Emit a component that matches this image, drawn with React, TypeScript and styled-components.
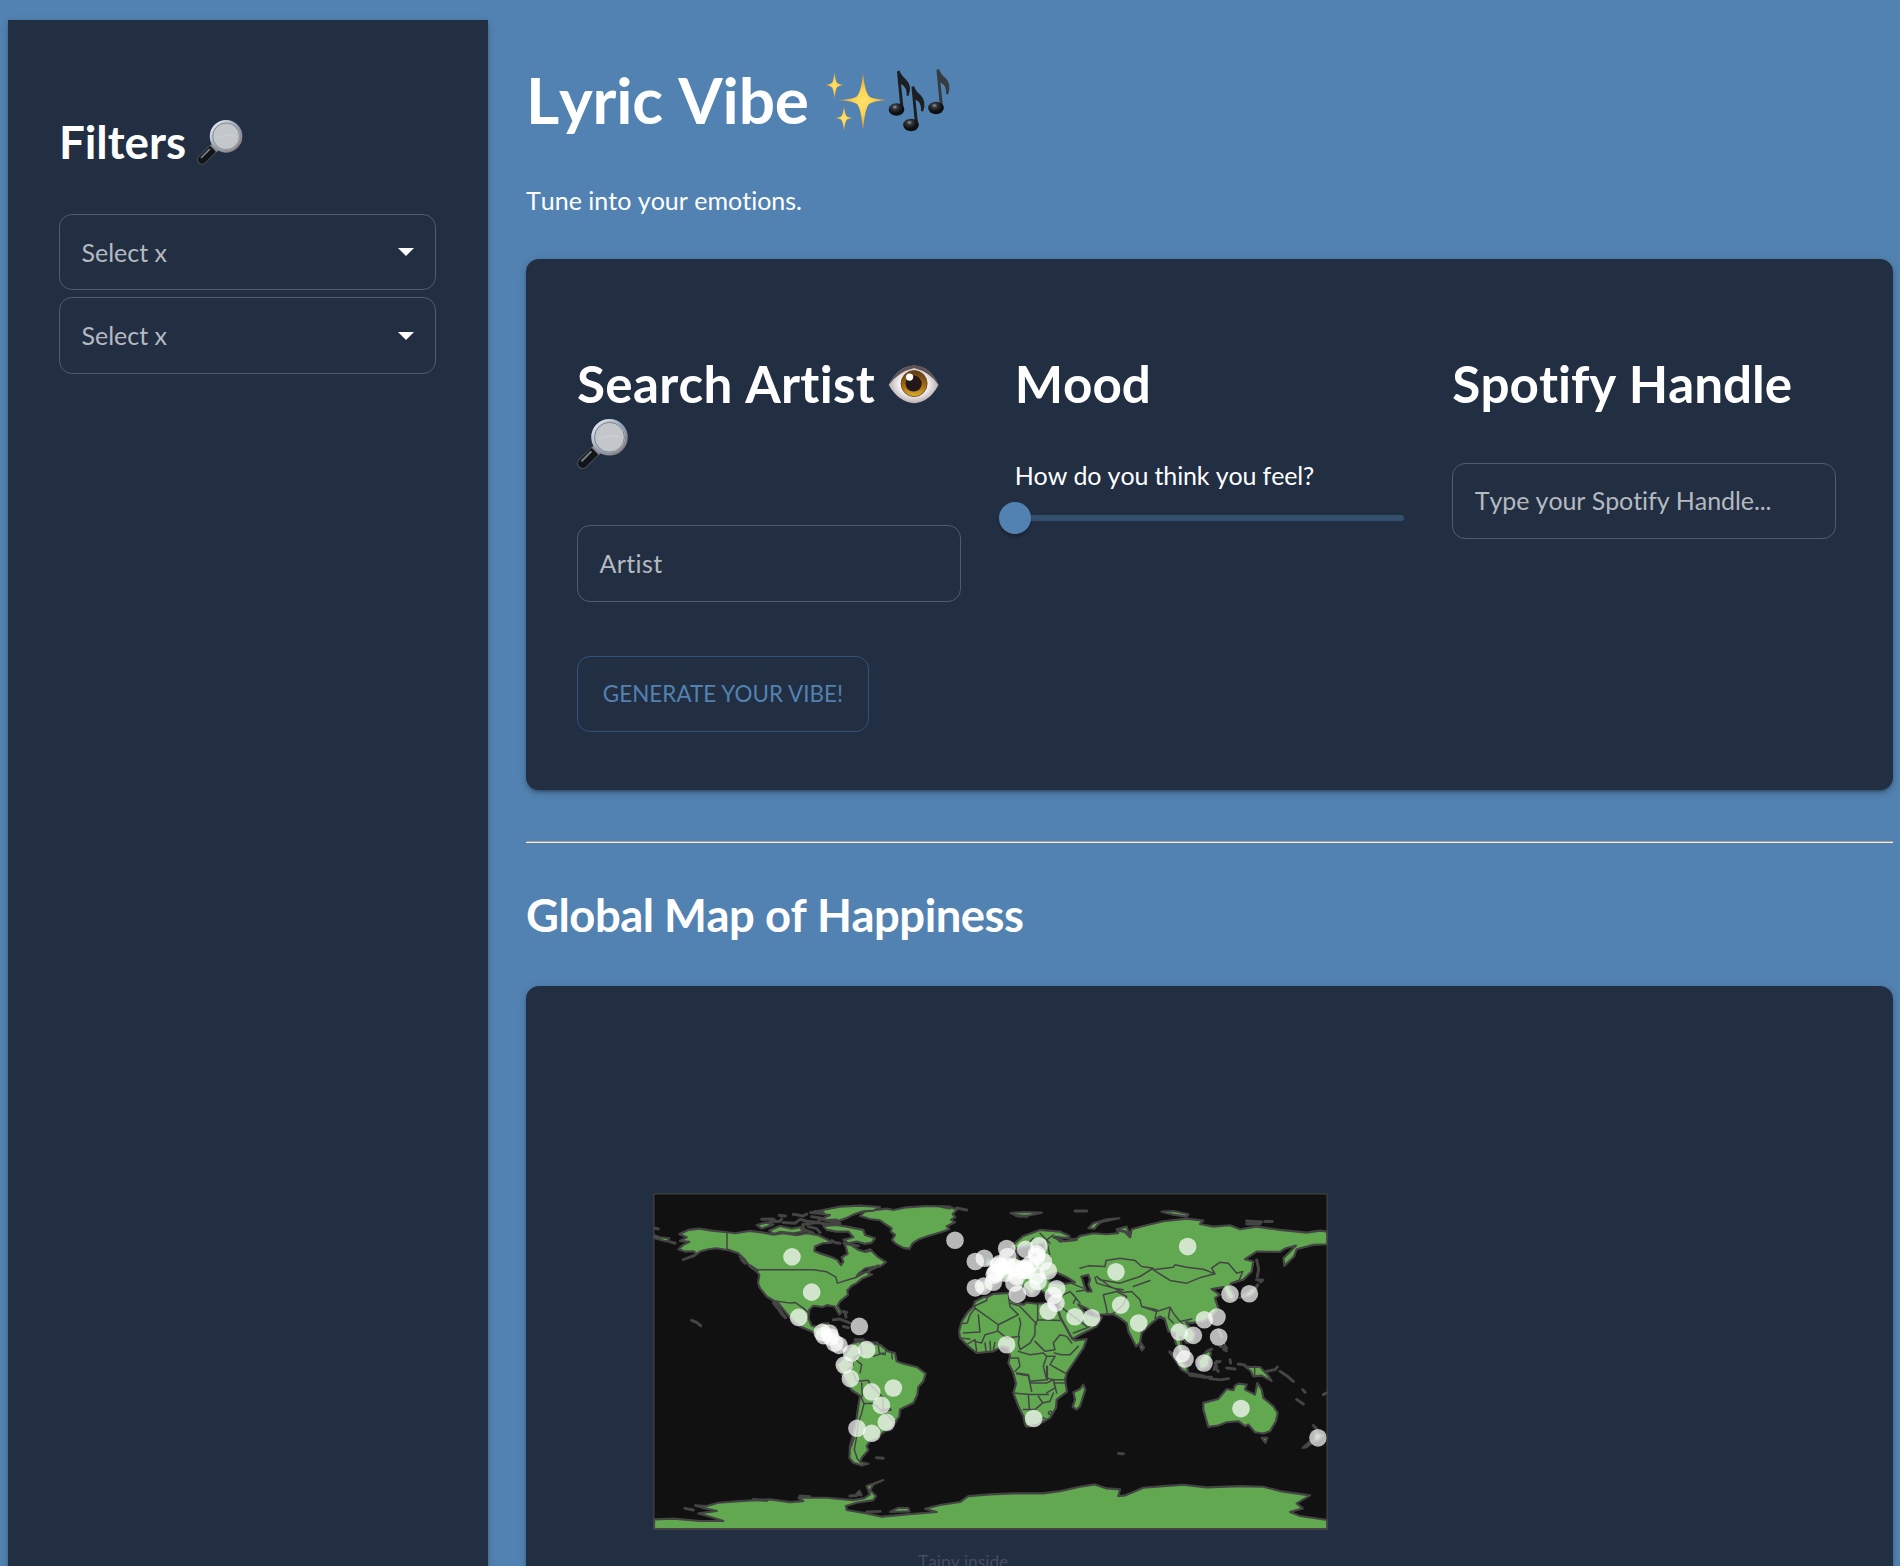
import React from 'react';
import styled, { createGlobalStyle } from 'styled-components';

const Global = createGlobalStyle`
  * { box-sizing: border-box; }
  html { background: #5282b1; }
  body { margin: 0; overflow: hidden; background: #5282b1; color: #fff; font-family: Lato, "Liberation Sans", sans-serif; font-size: 25px; line-height: 1.5; font-kerning: none; font-variant-ligatures: none; }
`;

const Page = styled.div`
  display: grid;
  grid-template-columns: 480px 1367px;
  column-gap: 38px;
  height: 1566px;
  padding-left: 8px;
  overflow: hidden;
`;

const shadow = '0 3px 3px -2px rgba(0,0,0,.3), 0 3px 4px rgba(0,0,0,.14), 0 2px 8px rgba(0,0,0,.14)';

const Sidebar = styled.aside`
  margin-top: 20px;
  padding: 95px 52px 0 51px;
  background: #222e42;
  box-shadow: ${shadow};
`;

const Main = styled.main`
  display: flex;
  flex-direction: column;
`;

const Heading = styled.h1<{ $size: number; $tracking?: number }>`
  margin: 0;
  font-size: ${p => p.$size}px;
  font-weight: 700;
  line-height: 1.167;
  letter-spacing: ${p => p.$tracking ?? 0}px;
`;

const Title = styled(Heading)`
  padding-top: 63px;
`;

const Tagline = styled.p`
  margin: 44.500px 0 0;
  height: 38px;
`;

const SelectList = styled.div`
  display: flex;
  flex-direction: column;
  gap: 7.2px;
  margin-top: 45.3px;
`;

const Field = styled.div<{ $tracking?: number }>`
  display: flex;
  align-items: center;
  justify-content: space-between;
  height: 76.5px;
  padding: 1px 21.4px 0;
  border: 1px solid #515c6b;
  border-radius: 13px;
  color: #b5b9c0;
  letter-spacing: ${p => p.$tracking ?? 0}px;
`;

const Caret = styled.span`
  width: 0;
  height: 0;
  border: 8px solid transparent;
  border-top-color: #fff;
  border-bottom: 0;
`;

const Card = styled.section`
  background: #222e42;
  border-radius: 13px;
  box-shadow: ${shadow};
`;

const SearchCard = styled(Card)`
  display: grid;
  grid-template-columns: repeat(3, 1fr);
  column-gap: 48px;
  height: 531px;
  margin-top: 38.500px;
  padding: 95px 51px 0;
`;

const Column = styled.div`
  display: flex;
  flex-direction: column;
  align-items: flex-start;
`;

const Input = styled(Field)<{ $top: number }>`
  width: 384px;
  margin-top: ${p => p.$top}px;
  padding-top: 0;
`;

const VibeButton = styled.button`
  width: 292px;
  height: 76.500px;
  margin-top: 54px;
  padding: 0;
  background: none;
  border: 1px solid #33527a;
  border-radius: 13px;
  color: #5282b1;
  font: 400 22.4px Lato, sans-serif;
  letter-spacing: .06px;
`;

const Question = styled.p`
  margin: 44px 0 0;
  letter-spacing: -.13px;
`;

const Rail = styled.div`
  display: flex;
  align-items: center;
  width: 389px;
  height: 6px;
  margin-top: 20.500px;
  border-radius: 3px;
  background: #34506f;
`;

const Thumb = styled.span`
  flex: none;
  width: 32px;
  height: 32px;
  margin-left: -16px;
  border-radius: 50%;
  background: #5282b1;
  box-shadow: 0 3px 3px rgba(0,0,0,.22);
`;

const Divider = styled.hr`
  width: 100%;
  height: 2px;
  margin: 51px 0 45px;
  border: 0;
  border-top: 1px solid #a79c95;
  border-bottom: 1px solid #fbeee0;
`;

const MapCard = styled(Card)`
  height: 620px;
  margin-top: 45px;
  padding: 207px 0 0 127px;
`;

const Figure = styled.figure`
  width: 675px;
  margin: 0;
`;

const MapDrawing = styled.svg`
  display: block;
  width: 675px;
  height: 337px;
`;

const Caption = styled.figcaption`
  margin-top: 19.500px;
  padding-left: 265px;
  color: #454d5e;
  font-size: 17.3px;
`;

const Emoji = styled.svg<{ $drop?: number }>`
  width: 1em;
  height: 1em;
  overflow: visible;
  vertical-align: ${p => p.$drop ?? -0.14}em;
`;

function Magnifier({ id }: { id: string }) {
  return (
    <Emoji viewBox="1 0 46 46" $drop={-0.15}>
      <defs>
        <linearGradient id={id} x1="0" y1="0" x2="1" y2="1">
          <stop offset="0" stopColor="#f6f8fb" />
          <stop offset=".5" stopColor="#8ea0b8" />
          <stop offset="1" stopColor="#8b7a72" />
        </linearGradient>
      </defs>
      <path d="M16.500 29.500L6 40" stroke="#4b5057" strokeWidth="10" strokeLinecap="round" />
      <path d="M16 30L6.200 39.800" stroke="#111419" strokeWidth="8.400" strokeLinecap="round" />
      <path d="M13.500 29.500L5.500 37.500" stroke="#777c84" strokeWidth="1.800" strokeLinecap="round" />
      <path d="M15 25L21.500 31.500" stroke="#8f8380" strokeWidth="2.500" />
      <circle cx="30.200" cy="16.400" r="15.200" fill="#bfc3c8" stroke={`url(#${id})`} strokeWidth="2.400" />
      <circle cx="30.200" cy="16.400" r="13.400" fill="#c3c6ca" stroke="#777d84" strokeWidth=".8" />
      <path d="M20 18c7-2 12-4 19-2" fill="none" stroke="#cbced2" strokeWidth="1.500" />
    </Emoji>
  );
}

function Sparkles() {
  return (
    <Emoji viewBox="0 0 64 64">
      <defs>
        <radialGradient id="spark">
          <stop offset="0" stopColor="#ffe36b" />
          <stop offset=".45" stopColor="#fcd04f" />
          <stop offset="1" stopColor="#e98d26" />
        </radialGradient>
      </defs>
      <g fill="url(#spark)">
        <path d="M39 4Q41 25 46 28Q49 30 63 31Q49 32 45 35Q41 39 39 61Q37 39 33 35Q29 32 15 31Q29 30 32 28Q37 25 39 4Z" />
        <path d="M10.500 3Q11.500 12 13 14Q15 15.500 20 16Q15 16.500 13 18.500Q11.500 20 10.500 30Q9.500 20 8 18.500Q6 16.500 1 16Q6 15.500 8 14Q9.500 12 10.500 3Z" />
        <path d="M20 37Q21 45 22.500 47Q24 48.500 29.500 49Q24 49.500 22.500 51Q21 53 20 62Q19 53 17.500 51Q16 49.500 10.500 49Q16 48.500 17.500 47Q19 45 20 37Z" />
      </g>
    </Emoji>
  );
}

function Notes() {
  return (
    <Emoji viewBox="0 0 64 64">
      <defs>
        <radialGradient id="noteHead" cx=".4" cy=".3">
          <stop offset="0" stopColor="#979ba2" />
          <stop offset=".35" stopColor="#33363b" />
          <stop offset="1" stopColor="#0d0f12" />
        </radialGradient>
      </defs>
      {[[0, 0], [14.500, 15.500], [39.500, -1.500]].map(([x, y], i) => (
        <g key={i} transform={`translate(${x} ${y})`}>
          <path d="M9 2.500L11.500 1.500Q13 6.500 18 10.500Q24.500 17 20.500 27L18.500 26.500Q19.500 18.500 13 15L15.500 39L12.500 40Z" fill={i === 2 ? '#363b42' : '#1b1f24'} />
          <ellipse cx="8.500" cy="40.500" rx="7.800" ry="6.200" fill="url(#noteHead)" />
        </g>
      ))}
    </Emoji>
  );
}

function Eye() {
  return (
    <Emoji viewBox="0 0 51 51" $drop={-0.15}>
      <defs>
        <radialGradient id="white" cx=".5" cy=".5">
          <stop offset=".5" stopColor="#fff" />
          <stop offset="1" stopColor="#b9adb0" />
        </radialGradient>
        <linearGradient id="iris" x1="0" y1="0" x2="0" y2="1">
          <stop offset="0" stopColor="#5b3b16" />
          <stop offset=".6" stopColor="#a66d13" />
          <stop offset="1" stopColor="#dfb02d" />
        </linearGradient>
      </defs>
      <path d="M.7 26Q10 7 26 6.500Q42 7 50.300 26Q41 43.500 26 44Q11 43.500 .7 26Z" fill="url(#white)" />
      <path d="M.7 26Q10 7 26 6.500Q42 7 50.300 26Q42 13 26 9Q10 13 .7 26Z" fill="#5d5254" />
      <circle cx="26" cy="24.500" r="13" fill="url(#iris)" stroke="#60421a" strokeWidth=".8" />
      <circle cx="25.500" cy="24.500" r="8" fill="#24171a" />
      <circle cx="21.500" cy="18" r="3.600" fill="#fff" />
    </Emoji>
  );
}

// Map units are a third of a pixel; land, borders and islets share one coordinate space.
const land = [
  'M115 208L130 195L148 186L120 183L140 172L118 162L145 150L178 146L215 152L262 157L285 160L330 153L370 158L400 164L430 160L470 166L500 160L535 166L560 178L575 188L548 190L525 200L523 213L545 222L575 232L592 240L603 256L610 246L605 232L623 222L617 200L610 188L632 194L655 210L672 215L690 208L712 230L738 247L720 260L695 262L675 266L655 282L650 290L680 275L694 268L684 280L696 284L668 295L650 310L635 318L622 332L624 345L600 365L592 378L604 398L598 404L584 380L560 376L548 382L520 378L508 390L505 415L515 438L535 442L545 432L565 430L560 450L590 462L592 485L610 505L630 510L612 516L600 510L575 490L545 470L515 455L480 440L455 420L435 395L415 370L408 368L422 390L437 415L425 405L400 362L380 350L360 325L354 310L358 285L350 275L330 260L315 240L295 220L270 212L230 205L205 208L180 215L160 230L128 240L170 222L160 214L135 215Z',
  'M660 108L675 94L740 86L760 90L800 82L860 78L930 80L950 90L938 102L946 112L933 119L945 127L920 139L928 148L900 158L860 170L835 179L818 190L808 207L790 204L768 192L756 180L765 165L752 155L755 145L735 132L720 121L690 117Z',
  'M510 98L560 88L600 80L660 77L720 81L700 92L670 94L640 104L620 114L598 122L575 125L545 117L570 105Z',
  'M550 138L590 135L620 140L670 150L675 165L705 175L695 188L675 192L650 185L625 190L610 180L640 172L625 155L590 155L560 150Z',
  'M388 152L420 138L455 146L490 140L498 154L460 160L420 156L400 162Z', 'M350 135L380 128L400 134L365 146Z', 'M42 165L60 172L88 175L80 185L42 174Z',
  'M612 530L625 510L640 490L665 482L690 488L720 495L745 515L765 520L770 545L790 552L830 562L857 582L850 605L835 622L832 645L820 670L795 682L780 690L778 710L765 730L755 750L735 755L722 765L715 778L690 785L680 800L685 812L665 835L660 848L685 853L665 858L640 850L628 835L630 800L638 770L645 740L650 715L655 680L660 648L635 632L615 600L600 575L590 555L605 540Z',
  'M1045 350L1060 342L1100 340L1112 338L1108 355L1115 364L1150 375L1160 368L1190 372L1215 370L1240 375L1255 392L1262 415L1280 445L1295 475L1305 482L1340 478L1330 505L1300 550L1280 580L1275 600L1281 636L1250 660L1248 685L1230 715L1195 735L1160 742L1155 735L1150 710L1135 680L1120 640L1128 612L1120 580L1105 550L1110 530L1105 505L1085 500L1060 515L1010 520L985 500L960 475L957 455L965 425L985 395L1000 380L1005 365L1030 352Z',
  'M1330 615L1336 630L1320 680L1310 690L1298 682L1305 660L1300 638L1320 628Z',
  'M1115 198L1150 168L1200 150L1260 155L1288 168L1282 178L1245 170L1260 185L1285 180L1310 176L1320 168L1360 160L1400 163L1435 160L1430 148L1460 140L1464 152L1472 165L1475 148L1510 138L1570 124L1640 116L1690 122L1680 132L1720 140L1770 136L1800 148L1850 140L1920 150L2000 158L2040 152L2062 155L2062 193L2020 195L1970 208L1962 230L1933 258L1930 235L1968 197L1935 206L1920 216L1850 215L1815 238L1840 245L1835 275L1810 300L1775 310L1768 322L1782 345L1780 360L1764 356L1750 322L1715 328L1740 345L1725 355L1735 385L1715 410L1690 425L1655 430L1638 428L1665 460L1660 485L1640 490L1620 470L1625 500L1642 528L1620 520L1605 485L1605 460L1585 455L1575 420L1560 410L1535 430L1505 460L1500 490L1488 500L1465 455L1460 430L1440 415L1420 403L1370 405L1340 386L1315 374L1335 398L1355 408L1386 413L1370 440L1320 465L1298 478L1290 465L1260 410L1255 390L1258 365L1246 345L1215 340L1190 325L1175 345L1150 320L1130 300L1155 338L1115 300L1090 298L1060 315L1035 335L1010 335L1005 310L1045 300L1045 275L1090 255L1120 235L1140 230L1165 240L1195 225L1185 205L1170 215L1145 220L1125 215Z',
  'M1345 145L1360 130L1400 118L1438 115L1385 126L1370 137L1364 146Z', 'M1565 95L1600 93L1645 103L1640 110L1600 104Z', 'M1112 99L1150 96L1205 98L1170 106L1135 110Z',
  'M1855 300L1870 300L1862 308Z',
  'M1850 318L1843 338L1830 348L1800 354L1825 336L1840 325Z',
  'M1588 515L1610 528L1640 560L1645 582L1625 570Z', 'M1675 545L1690 525L1705 512L1713 520L1705 560L1680 570Z', 'M1645 580L1690 588L1700 593L1650 588Z',
  'M1815 560L1835 562L1860 562L1885 588L1895 604L1865 588L1840 590L1832 574Z', 'M1503 490L1512 504L1506 512L1500 502Z', 'M1755 495L1760 515L1750 510Z',
  'M1690 670L1735 658L1760 628L1780 632L1785 618L1795 612L1820 615L1815 630L1845 645L1852 610L1865 630L1870 655L1900 680L1913 700L1908 725L1890 755L1870 762L1845 758L1825 735L1815 740L1795 725L1760 728L1735 738L1705 742L1700 725L1690 690Z',
  'M1865 775L1882 775L1876 790Z', 'M1988 805L2010 785L2016 790L2000 803Z', 'M2025 755L2048 768L2036 782L2022 785Z',
  'M42 1020L100 1018L180 1025L250 1025L210 1012L175 1002L230 995L195 987L165 978L200 980L235 970L300 965L390 960L450 968L490 965L475 955L560 955L640 962L672 957L690 945L680 920L730 902L700 915L690 932L708 950L700 962L650 970L618 980L620 992L680 1002L725 1012L800 1005L890 998L855 988L900 977L960 968L985 950L1050 945L1120 942L1210 942L1260 935L1320 922L1365 915L1400 927L1440 930L1435 950L1455 948L1510 925L1570 920L1630 916L1700 924L1800 920L1870 922L1920 935L2010 948L1970 972L1988 987L1950 998L1980 1010L2062 1022L2062 1049L42 1049Z',
  'M750 998L775 985L805 986L808 996Z', 'M648 945L658 934L665 948Z', 'M1040 282L1050 262L1038 254L1042 240L1060 238L1070 265L1082 272L1060 284Z',
];

const borders = [
  'M261 157V207L295 220', 'M355 270H520L560 276L588 292L592 310L625 300L650 292L670 280', 'M398 362L450 370L465 368L490 385L507 400', 'M532 455L545 452L560 448M562 480L590 465M600 505L605 495',
  'M660 485L665 520L640 535L665 555L660 580M625 545L640 555L620 575M640 580L650 605L685 602L690 615L715 640L730 655L728 690L752 692M662 650L672 672L700 672L745 710L760 725M672 672L665 700L655 730L650 770L643 810L652 838L662 850M715 495L718 520L735 525L738 510M755 520L757 538M665 610L667 650M700 530L730 520',
  'M1042 352L1040 362L1005 378V385L1075 435L1135 405L1110 380L1105 345M1005 385L990 405L982 430L963 432M1015 405L1020 457L970 460M1075 435L1072 455L1035 465L1025 490L1005 485M1110 370L1138 378L1190 433M1193 375V420L1260 422M1138 415L1142 430L1135 470L1100 475L1075 455M1193 420L1185 435V465L1170 490L1140 510L1135 490L1138 470M1185 485L1215 515L1245 510L1240 490L1260 465L1280 470L1295 490M1243 520L1265 525H1290L1315 500M960 475L990 478M980 495L1005 480L1010 515M1035 490L1038 515M1050 485L1052 515M1065 488L1060 512M1110 535H1135L1140 560L1125 575M1135 515L1170 525L1210 520L1220 530L1210 560L1220 600L1170 605L1165 585L1130 580M1220 530H1245L1230 555L1275 580M1220 560V595L1240 600H1278',
  'M1120 640L1170 645H1225M1130 582L1165 588L1175 635M1170 610L1220 610L1240 600L1245 625L1220 640M1165 645L1168 690L1150 690M1195 650L1208 670L1230 665L1240 640M1168 690L1185 690L1208 670M1245 610H1275M1240 600L1250 640M1222 560V600M1230 695a5 5 0 1 0 1 0M1210 715a6 6 0 1 0 1 0',
  'M1320 265L1345 258L1395 260L1398 242L1440 235L1485 242L1505 260L1540 265L1500 290L1440 310L1380 300M1540 270L1600 262L1605 255L1640 262L1690 268L1725 282L1685 292L1640 310L1590 302L1540 270M1725 282L1715 265L1740 247L1765 250L1790 280L1808 275L1798 300L1770 312M1380 300L1370 290L1410 320L1450 338L1475 335L1500 360L1505 380L1550 395L1590 382L1600 400L1620 425L1655 418M1390 345L1430 335L1460 350L1450 375L1420 400M1390 345L1398 380L1402 400M1505 380L1550 390M1550 395L1545 415L1575 415M1590 385L1585 415L1600 430M1625 430L1645 455M1240 165L1220 180L1230 230M1180 175L1165 190M1200 160L1230 190M1300 345L1320 370M1270 345L1290 335L1308 355L1300 370M1310 335L1340 330M1260 380L1300 410L1340 440M1300 460L1340 445L1350 440M1298 312L1330 325M1844 560V588M1480 320L1530 302M1365 292L1370 310L1420 325L1450 330',
];

// Inland seas and gulfs.
const water = [
  'M1324 290L1345 285L1350 300L1345 315L1355 335L1340 335L1332 315Z', 'M1222 290L1250 278L1280 292L1305 308L1270 312L1230 306Z', 'M1240 172L1275 174L1310 180L1275 184L1260 180Z', 'M1130 205L1185 195L1175 230L1140 245L1130 225Z', 'M1195 195L1210 190L1215 210L1200 220Z',
];

const islets = 'M365 118L400 117L405 122M418 106L436 108M390 125L420 124L425 117M430 128L465 130L475 122M460 103L490 108L500 102M480 118L500 124L525 126M488 134L530 128L560 132L600 130M515 110L540 114L560 122L590 120M525 95L550 98M485 148L505 154L520 160M505 140L530 146L540 158M530 128L540 120M575 182L585 188L600 190M88 185L105 190M45 145L55 147M155 422L170 428L182 438M305 240L315 250M300 230L310 238M580 420L600 418L630 430M610 440L625 444M615 400L618 412M610 395L620 398M645 480L670 480M695 490L712 490M400 370L436 412M1305 93H1340M1820 123L1865 126M1875 125H1897M1820 132L1860 132M1850 240L1856 268L1852 290M1850 300L1868 301M1853 315L1848 325M1590 518L1605 530M1650 584L1690 592L1715 593M1710 597L1738 600M1745 600L1765 597M1725 550L1740 545M1728 568L1735 575M1730 545L1722 570L1730 560M1770 540L1772 550M1760 565L1785 568M1795 553L1815 556M1880 575L1905 570L1912 562M1920 575L1940 588L1960 605M1970 660L1990 673M1988 630L1995 638M2050 645L2060 640M2020 738L2030 748M1436 822L1450 823M710 835L730 836M135 987L160 992M340 960L380 963M480 950L510 952M630 950L650 948M680 998L720 996M1740 500L1760 505M1735 450L1745 470M950 84L980 90M905 80L930 84M620 192L655 198M690 212L675 215M1700 515L1715 508M1432 150L1455 155L1470 170M330 258L352 272M690 270L715 258M1128 106L1160 110M640 775L632 800M725 693L750 690';

const markers: number[][] = [
  [456,231],[515,337],[476,413],[658,440],[547,458],[552,468],[568,460],[572,472],[584,490],[597,497],[635,520],[680,510],[613,556],[631,597],
  [945,181],[1006,245],[1033,235],[1100,206],[1157,208],[1197,198],[1190,222],[1190,230],[1103,230],[1078,252],[1085,262],[1100,257],[1075,258],[1063,285],[1060,307],[1031,319],[1006,324],[1067,278],[1095,280],[1120,262],[1138,268],[1150,272],[1160,272],[1155,265],[1122,310],[1132,343],[1176,326],[1194,305],[1190,288],[1210,245],[1225,273],[1250,327],[1240,347],[1248,370],[1225,394],[1305,411],[1355,414],[1100,495],[1130,290],[1172,252],
  [1643,200],[1428,276],[1442,376],[1496,430],[1770,343],[1828,342],[1693,420],[1731,412],[1618,457],[1660,467],[1736,472],[1625,522],[1635,538],[1692,550],
  [695,637],[760,625],[724,677],[739,728],[651,746],[695,761],[1181,717],[1803,687],[2034,775],
];

function WorldMap() {
  return (
    <MapDrawing viewBox="39 39 2025 1013" preserveAspectRatio="none">
      <rect x="39" y="39" width="2025" height="1013" fill="#111" />
      <g stroke="#444" strokeWidth="6.500" strokeLinejoin="round" strokeLinecap="round" fill="none">
        {land.map(d => <path key={d} d={d} fill="#61a851" />)}
        {borders.map(d => <path key={d} d={d} strokeWidth="4.500" />)}
        {water.map(d => <path key={d} d={d} fill="#111" />)}
        <path d={islets} strokeWidth="9" />
      </g>
      {markers.map(([x, y], i) => <circle key={i} cx={x} cy={y} r="26.500" fill="#fff" fillOpacity=".7" />)}
      <rect x="41.500" y="41.500" width="2020" height="1008" fill="none" stroke="#444" strokeWidth="4" />
    </MapDrawing>
  );
}

export default function App() {
  return (
    <Page>
      <Global />
      <Sidebar>
        <Heading as="h2" $size={45.8} $tracking={-0.1}>Filters <Magnifier id="rimSmall" /></Heading>
        <SelectList>
          <Field>Select x<Caret /></Field>
          <Field>Select x<Caret /></Field>
        </SelectList>
      </Sidebar>
      <Main>
        <Title $size={64} $tracking={-0.2}>Lyric Vibe <Sparkles /><Notes /></Title>
        <Tagline>Tune into your emotions.</Tagline>
        <SearchCard>
          <Column>
            <Heading $size={51.2} $tracking={0.25}>Search Artist <Eye /> <Magnifier id="rimLarge" /></Heading>
            <Input $top={52} $tracking={0.4}>Artist</Input>
            <VibeButton>GENERATE YOUR VIBE!</VibeButton>
          </Column>
          <Column>
            <Heading $size={51.2}>Mood</Heading>
            <Question>How do you think you feel?</Question>
            <Rail><Thumb /></Rail>
          </Column>
          <Column>
            <Heading $size={51.2}>Spotify Handle</Heading>
            <Input $top={49.5} $tracking={-0.08}>Type your Spotify Handle...</Input>
          </Column>
        </SearchCard>
        <Divider />
        <Heading as="h2" $size={45.4} $tracking={-0.47}>Global Map of Happiness</Heading>
        <MapCard>
          <Figure>
            <WorldMap />
            <Caption>Taipy inside</Caption>
          </Figure>
        </MapCard>
      </Main>
    </Page>
  );
}
